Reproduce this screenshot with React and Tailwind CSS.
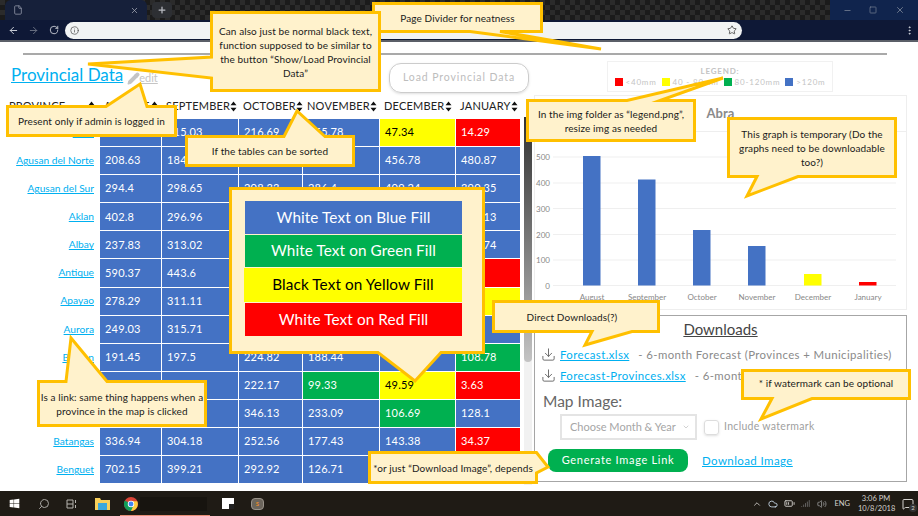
import { ArrowLeft, ArrowRight, RotateCw, Info, Star, MoreVertical, Plus, X, Minus, Square, File, Download, Pencil, Search, ChevronUp, ChevronDown, Cloud, BatteryMedium, Volume2, Signal, MessageSquare } from 'lucide-react'
import { FaWindows } from 'react-icons/fa'

const HEADERS = ['PROVINCE', 'AUGUST', 'SEPTEMBER', 'OCTOBER', 'NOVEMBER', 'DECEMBER', 'JANUARY']

// cells under the callouts have no readable value in the picture, so they stay empty
const ROWS = [
  ['Abra', ['', 'b'], ['415.03', 'b'], ['216.69', 'b'], ['155.78', 'b'], ['47.34', 'y'], ['14.29', 'r']],
  ['Agusan del Norte', ['208.63', 'b'], ['184.52', 'b'], ['', 'b'], ['', 'b'], ['456.78', 'b'], ['480.87', 'b']],
  ['Agusan del Sur', ['294.4', 'b'], ['298.65', 'b'], ['208.33', 'b'], ['286.4', 'b'], ['409.24', 'b'], ['390.35', 'b']],
  ['Aklan', ['402.8', 'b'], ['296.96', 'b'], ['', 'b'], ['', 'b'], ['', 'b'], ['150.13', 'b']],
  ['Albay', ['237.83', 'b'], ['313.02', 'b'], ['', 'b'], ['', 'b'], ['', 'b'], ['241.74', 'b']],
  ['Antique', ['590.37', 'b'], ['443.6', 'b'], ['', 'b'], ['', 'b'], ['', 'b'], ['', 'r']],
  ['Apayao', ['278.29', 'b'], ['311.11', 'b'], ['', 'b'], ['', 'b'], ['', 'b'], ['', 'y']],
  ['Aurora', ['249.03', 'b'], ['315.71', 'b'], ['', 'b'], ['', 'b'], ['', 'b'], ['', 'b']],
  ['Basilan', ['191.45', 'b'], ['197.5', 'b'], ['224.82', 'b'], ['188.44', 'b'], ['', 'b'], ['108.78', 'g']],
  ['', ['', 'b'], ['', 'b'], ['222.17', 'b'], ['99.33', 'g'], ['49.59', 'y'], ['3.63', 'r']],
  [' ', ['', 'b'], ['', 'b'], ['346.13', 'b'], ['233.09', 'b'], ['106.69', 'g'], ['128.1', 'b']],
  ['Batangas', ['336.94', 'b'], ['304.18', 'b'], ['252.56', 'b'], ['177.43', 'b'], ['143.38', 'b'], ['34.37', 'r']],
  ['Benguet', ['702.15', 'b'], ['399.21', 'b'], ['292.92', 'b'], ['126.71', 'b'], ['', 'y'], ['', 'r']],
]

const CELL = {
  b: 'bg-[#4472c4] text-white',
  g: 'bg-[#00b050] text-white',
  y: 'bg-[#ffff00] text-black',
  r: 'bg-[#ff0000] text-white',
}

const BARS = [
  { label: 'August', x: 48, top: 24, color: '#4472c4' },
  { label: 'September', x: 103, top: 47.5, color: '#4472c4' },
  { label: 'October', x: 158, top: 98, color: '#4472c4' },
  { label: 'November', x: 213, top: 114, color: '#4472c4' },
  { label: 'December', x: 269, top: 142, color: '#ffff00' },
  { label: 'January', x: 324, top: 150, color: '#ff0000' },
]

function SortIcon() {
  return (
    <svg width="7" height="11" viewBox="0 0 7 11" className="shrink-0">
      <path d="M3.5 0.5 L6.5 4.3 H0.5 Z M3.5 10.5 L0.5 6.7 H6.5 Z" fill="#111" />
    </svg>
  )
}

function Callout({ className, points, children }) {
  return (
    <div className={`absolute ${className}`}>
      <svg className="absolute inset-0 w-full h-full overflow-visible">
        <polygon points={points} fill="#fff2cc" stroke="#ffc000" strokeWidth="3" strokeLinejoin="miter" strokeMiterlimit="10" />
      </svg>
      <div className="relative h-full flex items-center justify-center text-center text-[10px] leading-[14px] tracking-[0.1px] text-[#1a1a1a] whitespace-nowrap">
        {children}
      </div>
    </div>
  )
}

function ChromeLogo() {
  return (
    <svg width="14" height="14" viewBox="0 0 20 20">
      <circle cx="10" cy="10" r="10" fill="#db4437" />
      <path d="M10 10 L1.3 5 A10 10 0 0 0 10 20 L15 11.5 Z" fill="#0f9d58" />
      <path d="M10 6 H18.9 A10 10 0 0 1 10 20 L14 11 Z" fill="#ffcd40" />
      <circle cx="10" cy="10" r="4.6" fill="#fff" />
      <circle cx="10" cy="10" r="3.5" fill="#4285f4" />
    </svg>
  )
}

function BrowserChrome() {
  return (
    <>
      <div className="h-5 flex bg-[#222] bg-[repeating-conic-gradient(#1b1b1b_0%_25%,#2b2b2b_0%_50%)] bg-[length:10px_10px]">
        <div className="ml-[5px] w-[142px] rounded-t-md bg-[#16203a] flex items-center justify-between px-2">
          <File size={10} className="text-[#8d93a3]" />
          <X size={9} className="text-[#a5a9b5]" />
        </div>
        <div className="ml-[5px] mt-[2px] w-[20px] h-[16px] rounded-sm bg-[#2d2f33] flex items-center justify-center">
          <Plus size={10} strokeWidth={3} className="text-[#b9bcc2]" />
        </div>
        <div className="ml-auto w-[88px] bg-[#10244d] flex items-center justify-around px-1 text-[#7c8598]">
          <Minus size={9} />
          <Square size={8} />
          <X size={10} />
        </div>
      </div>
      <div className="h-[22px] flex items-center bg-[#0e1836] border-b-2 border-[#5b5f68] text-[#d7dae1]">
        <ArrowLeft size={11} className="ml-[8px]" />
        <ArrowRight size={11} className="ml-[9px] text-[#6d7486]" />
        <RotateCw size={10} className="ml-[10px]" />
        <div className="ml-[6px] w-[677px] h-[17px] rounded-full bg-[#f1f3f4] flex items-center justify-between px-[3px] pr-[5px]">
          <Info size={9} className="ml-[2px] text-[#555]" />
          <Star size={10} className="text-[#444]" />
        </div>
        <MoreVertical size={11} className="ml-auto mr-[3px]" />
      </div>
    </>
  )
}

function ProvinceTable() {
  return (
    <div className="w-[520px]">
      <div className="h-[21px] pb-[6px] grid grid-cols-[99px_61px_76px_63px_76px_75px_64px] gap-x-px items-center text-[11px] tracking-[0.2px] text-[#222]">
        {HEADERS.map(h => (
          <div key={h} className={`flex items-center justify-between pr-[3px] ${h === 'PROVINCE' ? 'pl-[9px] pr-[4px]' : 'pl-[4px]'}`}>
            <span>{h}</span>
            <SortIcon />
          </div>
        ))}
      </div>
      <div className="grid grid-cols-[99px_61px_76px_63px_76px_75px_64px] gap-px auto-rows-[27.1px] text-[11px]">
        {ROWS.map(([name, ...cells]) => (
          <div key={name} className="contents">
            <a className="self-center text-right pr-[5px] text-[10.2px] text-[#00b0f0] underline">{name}</a>
            {cells.map(([value, tone], i) => (
              <div key={i} className={`flex items-center pl-[5px] tracking-[0.2px] ${CELL[tone]}`}>{value}</div>
            ))}
          </div>
        ))}
      </div>
    </div>
  )
}

function Legend() {
  return (
    <div className="self-center ml-[-1px] w-[226px] h-[31px] border border-[#f1f1f1] flex flex-col items-center text-[8px] tracking-[0.8px] text-[#c4c4c4] pt-[4px]">
      <div className="font-bold leading-[10px]">LEGEND:</div>
      <div className="flex items-center gap-[3px] mt-[1px] leading-[10px] whitespace-nowrap">
        <span className="w-2 h-2 bg-[#ff0000]" /><span className="mr-[2px]">&lt;40mm</span>
        <span className="w-2 h-2 bg-[#ffff00]" /><span className="mr-[2px]">40 - 80mm</span>
        <span className="w-2 h-2 bg-[#00b050]" /><span className="mr-[2px]">80-120mm</span>
        <span className="w-2 h-2 bg-[#4472c4]" /><span>&gt;120m</span>
      </div>
    </div>
  )
}

function ChartPanel() {
  const ticks = [[500, 25], [400, 51], [300, 76.5], [200, 102.5], [100, 128], [0, 153.5]]
  return (
    <div className="mt-[3px] h-[215px] border border-[#eee] flex flex-col">
      <div className="h-[36px] shrink-0 border-b border-[#eee] text-center text-[13px] font-bold leading-[34px] text-[#8a8a8a]">Abra</div>
      <svg width="371" height="177" className="block">
        {ticks.map(([label, y]) => (
          <g key={label}>
            <line x1="18" x2="361" y1={y} y2={y} stroke="#efefef" />
            <text x="15" y={y + 3} textAnchor="end" fontSize="8" fill="#888">{label}</text>
          </g>
        ))}
        {BARS.map(b => (
          <g key={b.label}>
            <rect x={b.x} y={b.top} width="17.5" height={153.5 - b.top} fill={b.color} />
            <text x={b.x + 9} y="168" textAnchor="middle" fontSize="8" fill="#888">{b.label}</text>
          </g>
        ))}
      </svg>
    </div>
  )
}

function DownloadRow({ name, text }) {
  return (
    <div className="flex items-center h-[21px] pl-[6px] text-[11.4px] text-[#8a8a8a] tracking-[0.4px] whitespace-nowrap">
      <Download size={15} strokeWidth={1.5} className="text-[#666] shrink-0" />
      <a className="ml-[4px] text-[#00b0f0] underline">{name}</a>
      <span className="ml-[9px]">{text}</span>
    </div>
  )
}

function DownloadsPanel() {
  return (
    <div className="mt-[5px] h-[167px] border border-[#a6a6a6] flex flex-col">
      <div className="text-center pt-[3px] text-[15px] leading-[20px] text-[#444]"><span className="underline">Downloads</span></div>
      <div className="mt-[5px]">
        <DownloadRow name="Forecast.xlsx" text="- 6-month Forecast (Provinces + Municipalities)" />
        <DownloadRow name="Forecast-Provinces.xlsx" text="- 6-month Forecast (Provinces)" />
      </div>
      <div className="pl-[8px] mt-[5px] text-[15.5px] leading-[20px] text-[#666]">Map Image:</div>
      <div className="flex items-center mt-[3px] pl-[25px]">
        <div className="w-[137px] h-[26px] border-2 border-[#e4e4e4] flex items-center justify-between pl-[8px] pr-[5px] text-[11px] text-[#a6a6a6]">
          <span>Choose Month &amp; Year</span>
          <ChevronDown size={8} className="text-[#bbb]" />
        </div>
        <div className="ml-[7px] w-[15px] h-[15px] rounded-[3px] border border-[#ddd] shadow-sm" />
        <span className="ml-[5px] text-[10.5px] tracking-[0.3px] text-[#a0a0a0]">Include watermark</span>
      </div>
      <div className="flex items-center mt-[9px] pl-[13px]">
        <div className="w-[140px] h-[23px] rounded-lg bg-[#00b050] text-white text-[11px] tracking-[0.7px] flex items-center justify-center">Generate Image Link</div>
        <a className="ml-[14px] text-[11.5px] tracking-[0.4px] text-[#00b0f0] underline">Download Image</a>
      </div>
    </div>
  )
}

function Taskbar() {
  return (
    <div className="h-[25px] flex items-center bg-[#1f1b15] text-[#d5d3cf] relative">
      <FaWindows size={11} className="ml-[9px] text-white" />
      <Search size={12} className="ml-[18px] scale-x-[-1] text-[#a8a6a2]" />
      <svg width="11" height="10" viewBox="0 0 11 10" className="ml-[16px]" fill="none" stroke="#b5b3ae">
        <path d="M1 1h6v8h-6zM1 5h6M9.5 1v3M9.5 6v3" />
      </svg>
      <svg width="15" height="13" viewBox="0 0 15 13" className="ml-[18px]">
        <path d="M0 1h5l1 2h9v10H0z" fill="#f7cf5a" />
        <rect x="3" y="6" width="9" height="7" fill="#3ba7dc" />
      </svg>
      <div className="ml-[14px] flex items-center">
        <ChromeLogo />
      </div>
      <div className="ml-[2px] w-[67px] h-[14px] bg-[#17140f]" />
      <div className="ml-[15px] w-[12px] h-[11px] bg-white relative">
        <span className="absolute right-0 bottom-0 w-[5px] h-[5px] bg-[#222]" />
      </div>
      <div className="ml-[17px] w-[13px] h-[12px] rounded-sm bg-[#6b655c] border border-[#99938a] flex items-center justify-center text-[6px] font-bold text-[#e08a2d]">S</div>
      <div className="ml-auto flex items-center">
        <ChevronUp size={10} />
        <Cloud size={10} className="ml-[6px] text-[#cfe0f0]" />
        <BatteryMedium size={11} className="ml-[6px]" />
        <Signal size={9} className="ml-[6px] text-[#777]" />
        <Volume2 size={10} className="ml-[7px] text-[#999]" />
        <span className="ml-[7px] text-[7.5px]">ENG</span>
        <div className="ml-[8px] text-center text-[7.5px] leading-[10px] w-[36px]">
          <div>3:06 PM</div>
          <div>10/8/2018</div>
        </div>
        <div className="relative ml-[8px] mr-[4px]">
          <MessageSquare size={12} />
          <span className="absolute -right-[3px] -bottom-[2px] w-[8px] h-[8px] rounded-full bg-[#333] text-[6px] leading-[8px] text-center">2</span>
        </div>
      </div>
      <span className="absolute left-[120px] bottom-0 w-[90px] h-[1px] bg-[#e98e76]" />
    </div>
  )
}

export default function App() {
  return (
    <div className="relative w-[918px] h-[516px] overflow-hidden flex flex-col bg-white font-[Lato,sans-serif]">
      <BrowserChrome />

      <main className="flex-1 min-h-0 overflow-hidden">
        <div className="mt-[11px] ml-[23px] w-[864px] h-[2px] bg-[#a9a9a9]" />
        <div className="flex">
          <div className="w-[524px] shrink-0">
            <div className="h-[43px] flex items-start">
              <a className="ml-[11px] mt-[7px] text-[17px] leading-[25px] text-[#00b0f0] underline">Provincial Data</a>
              <div className="ml-[4px] mt-[15px] flex items-center text-[11px] text-[#c4c4c4]">
                <Pencil size={13} fill="#c4c4c4" className="text-[#c4c4c4]" />
                <span className="underline ml-[-1px]">edit</span>
              </div>
              <div className="ml-auto mr-[-5px] mt-[8px] w-[140px] h-[30px] rounded-xl border border-[#ccc] shadow-sm flex items-center justify-center text-[10.5px] tracking-[0.9px] text-[#bdbdbd]">Load Provincial Data</div>
            </div>
            <ProvinceTable />
          </div>

          <div className="w-[8px] h-[368px] mt-[62px] bg-[#f1f1f1] shrink-0">
            <div className="h-[245px] rounded-b-sm bg-gradient-to-b from-[#333] to-[#c4c4c4]" />
          </div>

          <div className="ml-[2px] w-[373px] shrink-0 flex flex-col pt-[6px]">
            <Legend />
            <ChartPanel />
            <DownloadsPanel />
          </div>
        </div>
      </main>

      <Taskbar />

      {/* review notes laid over the page */}
      <Callout className="left-[372px] top-[2px] w-[171px] h-[31px]" points="1.5,1.5 169.5,1.5 169.5,29.5 128,29.5 229,47 98,29.5 1.5,29.5">Page Divider for neatness</Callout>
      <Callout className="left-[210px] top-[11px] w-[171px] h-[81px]" points="1.5,1.5 169.5,1.5 169.5,79.5 1.5,79.5 1.5,67 -122,53 1.5,46">
        <span>Can also just be normal black text,<br />function supposed to be similar to<br />the button “Show/Load Provincial<br />Data”</span>
      </Callout>
      <Callout className="left-[6px] top-[105px] w-[171px] h-[32px]" points="1.5,1.5 100,1.5 134,-21 141,1.5 169.5,1.5 169.5,30.5 1.5,30.5">Present only if admin is logged in</Callout>
      <Callout className="left-[185px] top-[135px] w-[170px] h-[32px]" points="1.5,1.5 99,1.5 112,-24 140,1.5 168.5,1.5 168.5,30.5 1.5,30.5">If the tables can be sorted</Callout>
      <Callout className="left-[526px] top-[99px] w-[170px] h-[43px]" points="1.5,1.5 101,1.5 197,-21 134,1.5 168.5,1.5 168.5,41.5 1.5,41.5">
        <span>In the img folder as “legend.png”,<br />resize img as needed</span>
      </Callout>
      <Callout className="left-[727px] top-[117px] w-[170px] h-[61px]" points="1.5,1.5 168.5,1.5 168.5,59.5 71,59.5 20,79 30,59.5 1.5,59.5">
        <span>This graph is temporary (Do the<br />graphs need to be downloadable<br />too?)</span>
      </Callout>
      <Callout className="left-[229px] top-[187px] w-[256px] h-[167px]" points="1.5,1.5 254.5,1.5 254.5,165.5 212,165.5 186,194 149,165.5 1.5,165.5">
        <div className="w-[218px] mr-[8px] mb-[4px] text-[15.3px] leading-none text-white">
          <div className="ml-px h-[33px] flex items-center justify-center bg-[#4472c4]">White Text on Blue Fill</div>
          <div className="ml-px mt-px h-[32px] flex items-center justify-center bg-[#00b050]">White Text on Green Fill</div>
          <div className="mt-px h-[34px] flex items-center justify-center bg-[#ffff00] text-black">Black Text on Yellow Fill</div>
          <div className="ml-px mt-px h-[33px] flex items-center justify-center bg-[#ff0000]">White Text on Red Fill</div>
        </div>
      </Callout>
      <Callout className="left-[492px] top-[300px] w-[168px] h-[33px]" points="1.5,1.5 166.5,1.5 166.5,31.5 140,31.5 93,45 100,31.5 1.5,31.5">
        <span className="pr-[8px]">Direct Downloads(?)</span>
      </Callout>
      <Callout className="left-[741px] top-[369px] w-[170px] h-[31px]" points="1.5,1.5 168.5,1.5 168.5,29.5 71,29.5 20,50 31,29.5 1.5,29.5">
        <span className="pb-[3px]">* if watermark can be optional</span>
      </Callout>
      <Callout className="left-[37px] top-[380px] w-[170px] h-[47px]" points="1.5,1.5 29,1.5 34,-42 70,1.5 168.5,1.5 168.5,45.5 1.5,45.5">
        <span>Is a link: same thing happens when a<br />province in the map is clicked</span>
      </Callout>
      <Callout className="left-[368px] top-[451px] w-[170px] h-[33px]" points="1.5,1.5 168.5,1.5 180,16 168.5,22 168.5,31.5 1.5,31.5">*or just “Download Image”, depends</Callout>
    </div>
  )
}
